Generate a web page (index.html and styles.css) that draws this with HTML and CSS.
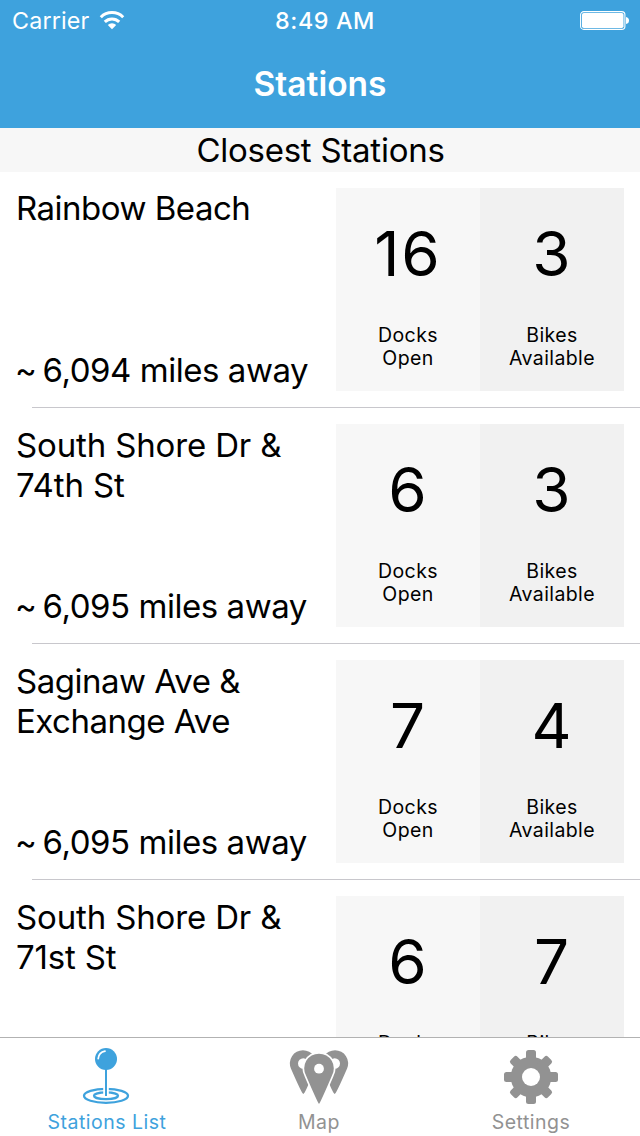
FILE: index.html
```html
<!DOCTYPE html>
<html lang="en">
<head>
<meta charset="utf-8">
<title>Stations</title>
<link rel="stylesheet" href="styles.css">
</head>
<body>
<div class="app">
  <header class="header">
    <div class="status">
      <div class="status-left">
        <span class="carrier">Carrier</span>
        <svg class="wifi" width="26" height="20" viewBox="0 0 26 20">
          <g fill="none" stroke="#fff" stroke-width="3">
            <path d="M1.8 7.2A15.8 15.8 0 0 1 24.2 7.2"/>
            <path d="M5.8 11.9A10.2 10.2 0 0 1 20.2 11.9"/>
          </g>
          <path d="M13 19.2L8.8 15A6 6 0 0 1 17.2 15Z" fill="#fff"/>
        </svg>
      </div>
      <span class="time">8:49 AM</span>
      <div class="status-right">
        <svg width="50" height="20" viewBox="0 0 50 20">
          <rect x=".6" y=".6" width="44.3" height="17.8" rx="3.2" fill="none" stroke="#fff" stroke-width="1.1"/>
          <rect x="2" y="2" width="41.5" height="15" rx="1.8" fill="#fff"/>
          <path d="M46 6Q49 6.5 49 9.5T46 13Z" fill="#fff"/>
        </svg>
      </div>
    </div>
    <h1 class="nav-title">Stations</h1>
  </header>
  <h2 class="section-title">Closest Stations</h2>
  <main class="list">
    <article class="row">
      <div class="info"><div class="name tight">Rainbow Beach</div><div class="distance"><span class="approx">~ </span>6,094 miles away</div></div>
      <div class="tile docks"><div class="count pair">16</div><div class="label">Docks<br>Open</div></div>
      <div class="tile bikes"><div class="count">3</div><div class="label">Bikes<br>Available</div></div>
    </article>
    <article class="row">
      <div class="info"><div class="name">South Shore Dr &amp;<br>74th St</div><div class="distance"><span class="approx">~ </span>6,095 miles away</div></div>
      <div class="tile docks"><div class="count">6</div><div class="label">Docks<br>Open</div></div>
      <div class="tile bikes"><div class="count">3</div><div class="label">Bikes<br>Available</div></div>
    </article>
    <article class="row">
      <div class="info"><div class="name tight">Saginaw Ave &amp;<br>Exchange Ave</div><div class="distance"><span class="approx">~ </span>6,095 miles away</div></div>
      <div class="tile docks"><div class="count">7</div><div class="label">Docks<br>Open</div></div>
      <div class="tile bikes"><div class="count">4</div><div class="label">Bikes<br>Available</div></div>
    </article>
    <article class="row">
      <div class="info"><div class="name">South Shore Dr &amp;<br>71st St</div></div>
      <div class="tile docks"><div class="count">6</div><div class="label">Docks<br>Open</div></div>
      <div class="tile bikes"><div class="count">7</div><div class="label">Bikes<br>Available</div></div>
    </article>
  </main>
  <nav class="tabs">
    <a class="tab active">
      <svg width="60" height="60" viewBox="0 0 60 60">
        <g fill="none" stroke="#3ea2dd">
          <ellipse cx="29" cy="49.8" rx="22" ry="7" stroke-width="2.3"/>
          <ellipse cx="29" cy="49.8" rx="12" ry="3.4" stroke-width="2.3"/>
        </g>
        <path d="M26.2 40h5.6v10.5h-5.6z" fill="#fff"/>
        <path d="M28 22h2v28h-2z" fill="#3ea2dd"/>
        <circle cx="29" cy="13" r="11" fill="#3ea2dd"/>
        <path d="M21.2 12.6Q21.8 6.4 28 5.2" fill="none" stroke="#fff" stroke-width="1.7" stroke-linecap="round"/>
      </svg>
      <span>Stations List</span>
    </a>
    <a class="tab">
      <svg width="60" height="60" viewBox="0 0 60 60">
        <g fill="#929292">
          <path fill-rule="evenodd" d="M14.3 48Q13 48 1.9 22.5A13.1 13.1 0 1 1 26 22.5Q16 48 14.3 48ZM14.3 12.2a5.3 5.3 0 1 0 .01 10.6a5.3 5.3 0 1 0-.01-10.6Z"/>
          <path fill-rule="evenodd" d="M45.7 48Q47 48 58.1 22.5A13.1 13.1 0 1 0 34 22.5Q44 48 45.7 48ZM45.7 12.2a5.3 5.3 0 1 0 .01 10.6a5.3 5.3 0 1 0-.01-10.6Z"/>
          <path stroke="#fff" stroke-width="3.2" paint-order="stroke" d="M30 58Q28.8 57 17 29.5A14.8 14.8 0 1 1 43 29.5Q31.2 57 30 58Z"/>
        </g>
        <circle cx="30" cy="22.7" r="4.9" fill="#fff"/>
      </svg>
      <span>Map</span>
    </a>
    <a class="tab">
      <svg width="60" height="60" viewBox="0 0 60 60">
        <g fill="#929292">
          <circle cx="30" cy="31" r="20.3"/>
          <rect x="25" y="4" width="10" height="54" rx="2.5"/>
          <rect x="3" y="26" width="54" height="10" rx="2.5"/>
          <rect x="25.2" y="4.6" width="9.6" height="52.8" rx="2.5" transform="rotate(45 30 31)"/>
          <rect x="25.2" y="4.6" width="9.6" height="52.8" rx="2.5" transform="rotate(-45 30 31)"/>
        </g>
        <circle cx="30" cy="31" r="9" fill="#fff"/>
      </svg>
      <span>Settings</span>
    </a>
  </nav>
</div>
</body>
</html>
```
FILE: styles.css
```css
* { box-sizing: border-box; }
body { margin: 0; background: #fff; color: #000; font-family: Inter, "Liberation Sans", sans-serif; }
.app { width: 640px; height: 1136px; display: flex; flex-direction: column; overflow: hidden; white-space: nowrap; }
.header { height: 128px; background: #3ea2dd; color: #fff; flex: none; }
.status { height: 41px; display: grid; grid-template-columns: 1fr auto 1fr; padding: 0 10px 0 12px; line-height: 42px; font-size: 23.3px; }
.status-left { display: flex; gap: 10px; }
.carrier { letter-spacing: .15px; }
.wifi { margin-top: 10px; }
.time { font-weight: 500; letter-spacing: .6px; padding-left: 8px; }
.status-right { display: flex; justify-content: flex-end; padding-top: 11px; }
.nav-title { margin: 0; font-size: 33.5px; font-weight: 600; line-height: 87px; text-align: center; }
.section-title { margin: 0; flex: none; height: 44px; line-height: 44px; background: #f7f7f7; font-size: 33px; font-weight: 400; text-align: center; letter-spacing: -.25px; padding-left: 1px; }
.list { flex: 1; min-height: 0; overflow: hidden; }
.row { display: flex; height: 236px; padding: 16px 16px 17px; background: linear-gradient(#c8c7cc, #c8c7cc) 32px 235px no-repeat; background-size: 608px 1px; }
.info { width: 320px; display: flex; flex-direction: column; justify-content: space-between; font-size: 33px; line-height: 40px; padding-bottom: 1px; }
.row + .row .info { padding-top: 1px; }
.name { letter-spacing: -.15px; }
.tight { letter-spacing: -.5px; }
.distance { letter-spacing: -.45px; }
.approx { margin: 0 -2.7px 0 -1px; }
.tile { width: 144px; height: 203px; padding-top: 29px; display: flex; flex-direction: column; gap: 33px; text-align: center; }
.docks { background: #f7f7f7; }
.bikes { background: #f1f1f1; }
.count { font-size: 62px; line-height: 74px; padding-right: 1px; }
.pair { letter-spacing: 2px; padding-right: 0; }
.label { font-size: 19.5px; line-height: 23px; letter-spacing: .4px; }
.tabs { flex: none; height: 99px; border-top: 1px solid #b2b2b2; background: #fff; display: grid; grid-template-columns: repeat(3, 212px); padding-left: 1px; }
.tab { display: flex; flex-direction: column; align-items: center; color: #929292; font-size: 19.5px; line-height: 24px; padding-top: 8px; letter-spacing: .5px; }
.tab span { margin-top: 4px; }
.active { color: #3ea2dd; }
```
